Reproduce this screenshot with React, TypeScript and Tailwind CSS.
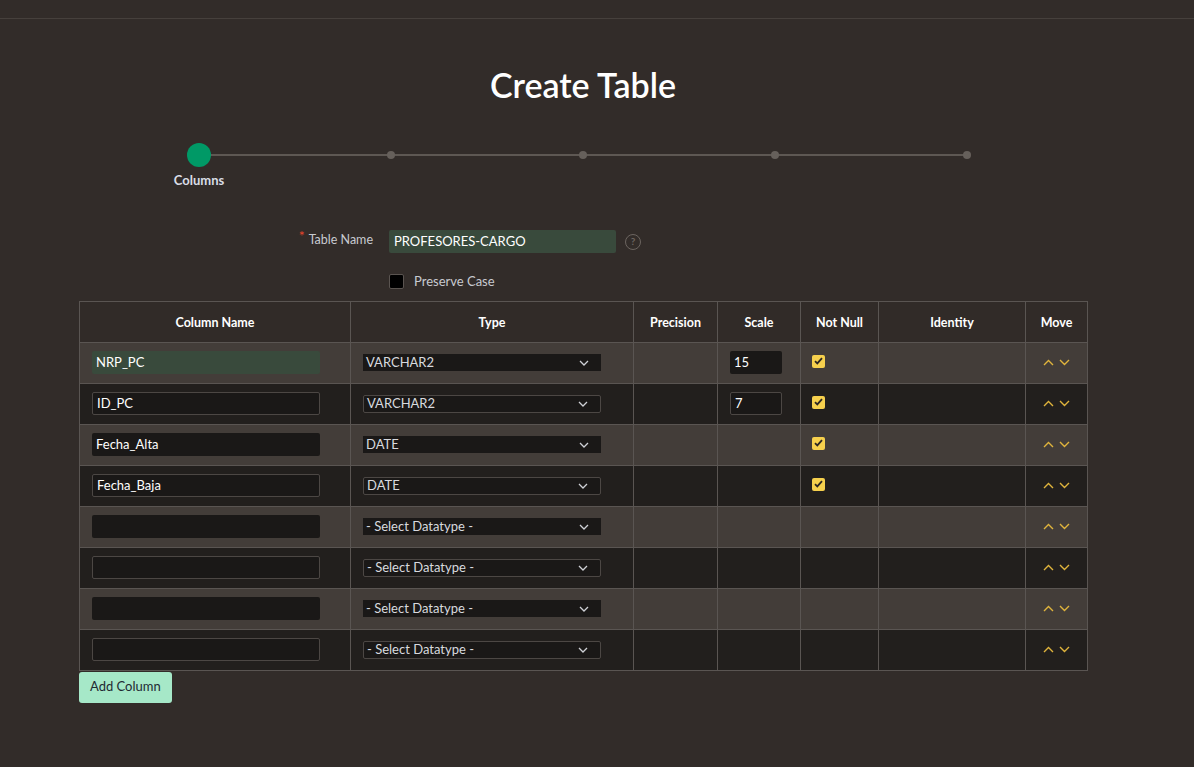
import React from "react";

interface Row {
  name: string;
  type: string;
  scale: string;
  notNull: boolean;
}

const rows: Row[] = [
  { name: "NRP_PC", type: "VARCHAR2", scale: "15", notNull: true },
  { name: "ID_PC", type: "VARCHAR2", scale: "7", notNull: true },
  { name: "Fecha_Alta", type: "DATE", scale: "", notNull: true },
  { name: "Fecha_Baja", type: "DATE", scale: "", notNull: true },
  { name: "", type: "- Select Datatype -", scale: "", notNull: false },
  { name: "", type: "- Select Datatype -", scale: "", notNull: false },
  { name: "", type: "- Select Datatype -", scale: "", notNull: false },
  { name: "", type: "- Select Datatype -", scale: "", notNull: false },
];

const headers = [
  { label: "Column Name", w: "w-[271px]" },
  { label: "Type", w: "w-[283px]" },
  { label: "Precision", w: "w-[84px]" },
  { label: "Scale", w: "w-[83px]" },
  { label: "Not Null", w: "w-[78px]" },
  { label: "Identity", w: "w-[147px]" },
  { label: "Move", w: "w-[62px]" },
];

function Chevron({ up }: { up?: boolean }) {
  return (
    <svg width="11" height="7" viewBox="0 0 11 7" fill="none">
      <path
        d={up ? "M1 6 L5.5 1.5 L10 6" : "M1 1 L5.5 5.5 L10 1"}
        stroke="#e0b43c"
        strokeWidth="1.4"
      />
    </svg>
  );
}

function Check() {
  return (
    <div className="flex h-[13px] w-[13px] items-center justify-center rounded-[2px] bg-[#f6d04d]">
      <svg width="9" height="8" viewBox="0 0 9 8" fill="none">
        <path d="M1 4.2 L3.3 6.4 L8 1.2" stroke="#2b2623" strokeWidth="1.8" />
      </svg>
    </div>
  );
}

export default function App() {
  return (
    <div className="min-h-[767px] w-full bg-[#322c29] font-['Lato',sans-serif] text-[13px] text-[#d6d8dd]">
      <div className="h-[18px]" />
      <div className="h-px bg-[#46403c]" />

      <h1 className="w-[1166px] pt-[47px] text-center text-[34px] font-semibold leading-[38px] text-white">Create Table</h1>

      {/* steps */}
      <div className="relative mt-[39px] ml-[187px] h-[60px] w-[792px]">
        <div className="absolute left-[12px] top-[11px] h-[2px] w-[768px] bg-[#5e5853]" />
        <div className="absolute left-0 top-0 h-[24px] w-[24px] rounded-full bg-[#009966]" />
        <div className="absolute left-[200px] top-[8px] h-[8px] w-[8px] rounded-full bg-[#66605b]" />
        <div className="absolute left-[392px] top-[8px] h-[8px] w-[8px] rounded-full bg-[#66605b]" />
        <div className="absolute left-[584px] top-[8px] h-[8px] w-[8px] rounded-full bg-[#66605b]" />
        <div className="absolute left-[776px] top-[8px] h-[8px] w-[8px] rounded-full bg-[#66605b]" />
        <div className="absolute left-[-18px] top-[29px] w-[60px] text-center text-[13px] leading-[16px] font-bold text-[#d9dde6]">Columns</div>
      </div>

      {/* table name */}
      <div className="mt-[27px] flex items-center">
        <div className="flex w-[389px] justify-end pr-[16px]">
          <span className="relative -top-[6px] mr-[4px] text-[14px] text-[#e8452c]">*</span>
          <span className="text-[12.5px] text-[#c8cad0]">Table Name</span>
        </div>
        <div className="flex h-[23px] w-[227px] items-center rounded-[2px] bg-[#394a3c] px-[5px] text-white">PROFESORES-CARGO</div>
        <div className="ml-[9px] flex h-[16px] w-[16px] items-center justify-center rounded-full border-[1.5px] border-[#6c6560] text-[10px] font-bold text-[#6c6560]">?</div>
      </div>

      <div className="mt-[19px] flex items-center pl-[389px]">
        <div className="h-[15px] w-[15px] rounded-[2px] border border-[#5a5450] bg-black" />
        <span className="ml-[10px] text-[#c8cad0]">Preserve Case</span>
      </div>

      {/* columns table */}
      <div className="mt-[9px] ml-[79px]">
        <table className="border-collapse border border-[#5a5552]">
          <thead>
            <tr className="h-[41px] bg-[#312b28]">
              {headers.map((h) => (
                <th key={h.label} className={`${h.w} border border-[#5a5552] pt-[3px] text-center text-[12.5px] font-bold text-white`}>
                  {h.label}
                </th>
              ))}
            </tr>
          </thead>
          <tbody>
            {rows.map((r, i) => {
              const odd = i % 2 === 0;
              return (
                <tr key={i} className={`h-[41px] ${odd ? "bg-[#433d39]" : "bg-[#221f1d]"}`}>
                  <td className="border border-[#5a5552] px-[12px]">
                    <div
                      className={`flex h-[23px] w-[228px] items-center rounded-[2px] px-[4px] text-white ${
                        i === 0 ? "bg-[#394a3c]" : "bg-[#1a1817]"
                      } ${odd ? "" : "border border-[#4c4744]"}`}
                    >
                      {r.name}
                    </div>
                  </td>
                  <td className="border border-[#5a5552] px-[12px]">
                    <div
                      className={`flex h-[17px] w-[238px] items-center justify-between bg-[#1a1817] pl-[3px] pr-[12px] text-[#d8dadf] ${
                        odd ? "" : "h-[18px] rounded-[2px] border border-[#4c4744]"
                      }`}
                    >
                      <span>{r.type}</span>
                      <svg width="10" height="6" viewBox="0 0 10 6" fill="none">
                        <path d="M1 1 L5 5 L9 1" stroke="#cfd1d6" strokeWidth="1.3" />
                      </svg>
                    </div>
                  </td>
                  <td className="border border-[#5a5552]" />
                  <td className="border border-[#5a5552] px-[12px]">
                    {r.scale && (
                      <div
                        className={`flex h-[23px] w-[52px] items-center rounded-[2px] bg-[#1a1817] px-[4px] text-white ${
                          odd ? "" : "border border-[#4c4744]"
                        }`}
                      >
                        {r.scale}
                      </div>
                    )}
                  </td>
                  <td className="border border-[#5a5552] px-[11px]">
                    {r.notNull && (
                      <div className="-mt-[3px]">
                        <Check />
                      </div>
                    )}
                  </td>
                  <td className="border border-[#5a5552]" />
                  <td className="border border-[#5a5552]">
                    <div className="flex items-center justify-center gap-[5px]">
                      <Chevron up />
                      <Chevron />
                    </div>
                  </td>
                </tr>
              );
            })}
          </tbody>
        </table>
        <button className="mt-px h-[31px] rounded-[3px] bg-[#a6e8c8] px-[11px] text-[13px] text-[#1f2a33]">Add Column</button>
      </div>
    </div>
  );
}
